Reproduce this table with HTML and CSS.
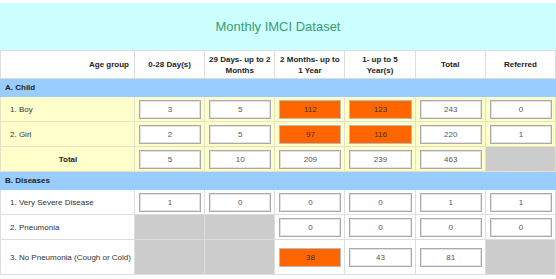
FILE: index.html
```html
<!DOCTYPE html>
<html lang="en">
<head>
  <meta charset="UTF-8" />
  <title>Monthly IMCI Dataset</title>
  <link rel="stylesheet" href="styles.css">
</head>
<body>
  <div class="page">
    <!-- Dataset title band -->
    <div class="title-band">
      <h1>Monthly IMCI Dataset</h1>
    </div>

    <table class="dataset">
      <colgroup>
        <col class="col-label">
        <col><col><col><col><col><col>
      </colgroup>
      <thead>
        <tr class="head-row">
          <th class="age-group">Age group</th>
          <th>0-28 Day(s)</th>
          <th>29 Days- up to 2<br>Months</th>
          <th>2 Months- up to<br>1 Year</th>
          <th>1- up to 5<br>Year(s)</th>
          <th>Total</th>
          <th>Referred</th>
        </tr>
      </thead>
      <tbody>
        <!-- A. Child -->
        <tr class="section"><td colspan="7">A. Child</td></tr>
        <tr class="child">
          <td class="label">1. Boy</td>
          <td><input class="cell" value="3"></td>
          <td><input class="cell" value="5"></td>
          <td><input class="cell alert" value="112"></td>
          <td><input class="cell alert" value="123"></td>
          <td><input class="cell" value="243"></td>
          <td><input class="cell" value="0"></td>
        </tr>
        <tr class="child">
          <td class="label">2. Girl</td>
          <td><input class="cell" value="2"></td>
          <td><input class="cell" value="5"></td>
          <td><input class="cell alert" value="97"></td>
          <td><input class="cell alert" value="116"></td>
          <td><input class="cell" value="220"></td>
          <td><input class="cell" value="1"></td>
        </tr>
        <tr class="child">
          <td class="label total">Total</td>
          <td><input class="cell" value="5"></td>
          <td><input class="cell" value="10"></td>
          <td><input class="cell" value="209"></td>
          <td><input class="cell" value="239"></td>
          <td><input class="cell" value="463"></td>
          <td class="blocked"></td>
        </tr>

        <!-- B. Diseases -->
        <tr class="section"><td colspan="7">B. Diseases</td></tr>
        <tr>
          <td class="label">1. Very Severe Disease</td>
          <td><input class="cell" value="1"></td>
          <td><input class="cell" value="0"></td>
          <td><input class="cell" value="0"></td>
          <td><input class="cell" value="0"></td>
          <td><input class="cell" value="1"></td>
          <td><input class="cell" value="1"></td>
        </tr>
        <tr>
          <td class="label">2. Pneumonia</td>
          <td class="blocked"></td>
          <td class="blocked"></td>
          <td><input class="cell" value="0"></td>
          <td><input class="cell" value="0"></td>
          <td><input class="cell" value="0"></td>
          <td><input class="cell" value="0"></td>
        </tr>
        <tr class="tall">
          <td class="label">3. No Pneumonia (Cough or Cold)</td>
          <td class="blocked"></td>
          <td class="blocked"></td>
          <td><input class="cell alert" value="38"></td>
          <td><input class="cell" value="43"></td>
          <td><input class="cell" value="81"></td>
          <td class="blocked"></td>
        </tr>
      </tbody>
    </table>
  </div>
</body>
</html>
```

FILE: styles.css
```css
/* Reset and global settings */
* {
  margin: 0;
  padding: 0;
  box-sizing: border-box;
}
body {
  font-family: "Liberation Sans", Arial, sans-serif;
  font-size: 8px;
  color: #333;
  background-color: #fff;
  overflow: hidden;
}
.page {
  padding-top: 3px;
}

/* Title band */
.title-band {
  background-color: #ccffff;
  height: 47px;
  display: flex;
  align-items: center;
  justify-content: center;
}
.title-band h1 {
  font-size: 13px;
  font-weight: normal;
  color: #3d9a6f;
}

/* Dataset table */
.dataset {
  width: 556px;
  table-layout: fixed;
  border-collapse: collapse;
}
.dataset .col-label {
  width: 134px;
}
.dataset td,
.dataset th {
  border: 1px solid #ddd;
}

/* Column headers */
.head-row th {
  height: 28px;
  background-color: #fff;
  color: #222;
  font-weight: bold;
  font-size: 8px;
  line-height: 11px;
  text-align: center;
  vertical-align: middle;
  padding: 2px;
}
.head-row th.age-group {
  text-align: right;
  padding-right: 5px;
}

/* Section bands */
.section td {
  height: 18px;
  background-color: #99ccff;
  border-color: #99ccff;
  font-weight: bold;
  color: #222;
  line-height: 9px;
  padding: 0 3px;
}

/* Data rows */
.dataset tbody tr {
  height: 25px;
}
.dataset tbody td {
  padding: 0 3px 0 4px;
  vertical-align: middle;
}
.dataset tbody tr.section {
  height: 18px;
}
.dataset tbody tr.tall {
  height: 35px;
}
.child td {
  background-color: #ffffcc;
  border-color: #e4e4c4;
}
.dataset td.label {
  padding-left: 9px;
}
.dataset td.total {
  text-align: center;
  font-weight: bold;
  color: #222;
  padding-left: 4px;
}
.dataset td.blocked {
  background-color: #ccc;
}

/* Entry fields */
.cell {
  display: block;
  width: 100%;
  height: 19px;
  border: 1px solid #aaa;
  box-shadow: inset 0 0 0 1px #e2e2e2;
  background-color: #fff;
  font-family: "Liberation Sans", Arial, sans-serif;
  font-size: 8px;
  color: #555;
  text-align: center;
  outline: none;
}
.cell.alert {
  background-color: #ff6600;
  border-color: #bbb;
  box-shadow: none;
  color: #333;
}
```
